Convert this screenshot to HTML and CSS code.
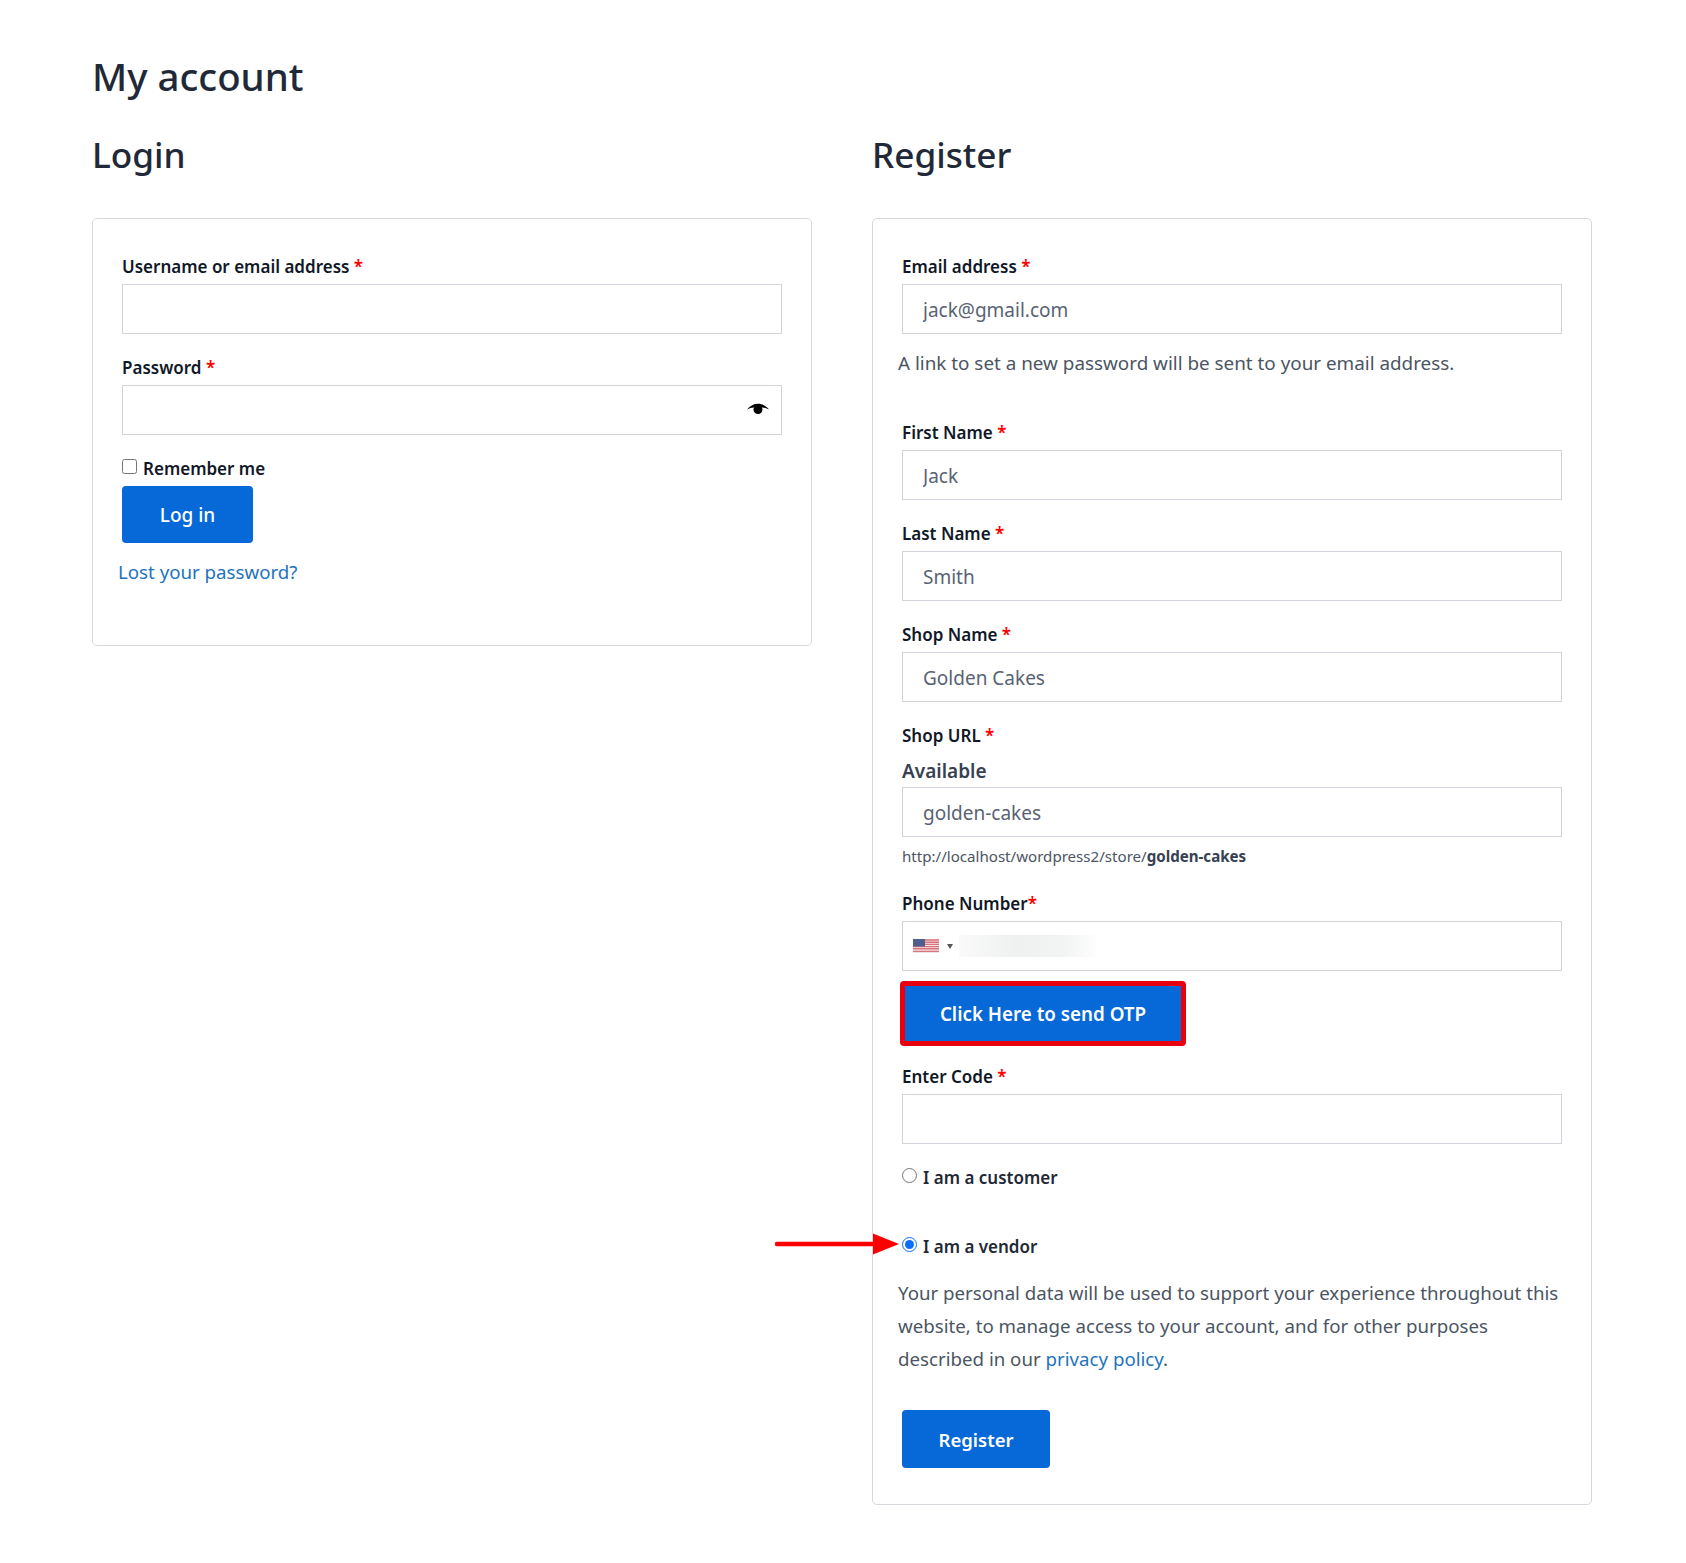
FILE: index.html
```html
<!DOCTYPE html>
<html lang="en">
<head>
    <meta charset="UTF-8">
    <title>My account</title>
    <link rel="stylesheet" href="styles.css">
</head>
<body>
    <div class="container">
        <h1 class="page-title">My account</h1>
        <div class="columns">
            <div class="column">
                <h2 class="column-title">Login</h2>
                <form class="card card-login">
                    <div class="form-row">
                        <label class="field-label">Username or email address <span class="required">*</span></label>
                        <input class="text-input" type="text">
                    </div>
                    <div class="form-row">
                        <label class="field-label">Password <span class="required">*</span></label>
                        <div class="password-wrap">
                            <input class="text-input" type="password">
                            <svg class="eye-icon" width="22" height="13" viewBox="0 0 22 13">
                                <path d="M0 6.500C3 2.800 7 0.800 11 0.800S19 2.800 22 6.500C19.500 5.200 17.500 4.700 15 4.500H7C4.500 4.700 2.500 5.200 0 6.500Z" fill="#000"/>
                                <circle cx="11" cy="6.500" r="4.500" fill="#000"/>
                            </svg>
                        </div>
                    </div>
                    <label class="remember"><input class="check" type="checkbox"> Remember me</label>
                    <button class="btn btn-login" type="button">Log in</button>
                    <a class="link lost-link" href="#">Lost your password?</a>
                </form>
            </div>
            <div class="column">
                <h2 class="column-title">Register</h2>
                <form class="card card-register">
                    <div class="form-row">
                        <label class="field-label">Email address <span class="required">*</span></label>
                        <input class="text-input" type="text" value="jack@gmail.com">
                    </div>
                    <p class="note">A link to set a new password will be sent to your email address.</p>
                    <div class="form-row">
                        <label class="field-label">First Name <span class="required">*</span></label>
                        <input class="text-input" type="text" value="Jack">
                    </div>
                    <div class="form-row">
                        <label class="field-label">Last Name <span class="required">*</span></label>
                        <input class="text-input" type="text" value="Smith">
                    </div>
                    <div class="form-row">
                        <label class="field-label">Shop Name <span class="required">*</span></label>
                        <input class="text-input" type="text" value="Golden Cakes">
                    </div>
                    <div class="form-row row-url">
                        <label class="field-label">Shop URL <span class="required">*</span></label>
                        <div class="available">Available</div>
                        <input class="text-input" type="text" value="golden-cakes">
                        <div class="shop-url">http://localhost/wordpress2/store/<strong>golden-cakes</strong></div>
                    </div>
                    <div class="form-row row-phone">
                        <label class="field-label">Phone Number<span class="required">*</span></label>
                        <div class="phone-input">
                            <svg class="flag" width="26" height="14" viewBox="0 0 26 14">
                                <rect width="26" height="14" fill="#f3e3e3"/>
                                <path d="M0 1h26M0 3.200h26M0 5.400h26M0 7.600h26M0 9.800h26M0 12.400h26" stroke="#d9747c" stroke-width="1.400"/>
                                <rect width="12" height="7.500" fill="#4f5d8f"/>
                            </svg>
                            <span class="flag-arrow"></span>
                            <span class="phone-blur"></span>
                        </div>
                    </div>
                    <button class="btn btn-otp" type="button">Click Here to send OTP</button>
                    <div class="form-row row-code">
                        <label class="field-label">Enter Code <span class="required">*</span></label>
                        <input class="text-input" type="text">
                    </div>
                    <label class="role role-customer"><input class="radio" type="radio" name="role"> I am a customer</label>
                    <label class="role role-vendor">
                        <svg class="arrow" width="124" height="22" viewBox="0 0 124 22">
                            <path d="M2 11H100" stroke="#f00" stroke-width="4.500" stroke-linecap="round"/>
                            <path d="M98 0.500L124 11 98 21.500Z" fill="#f00"/>
                        </svg>
                        <input class="radio" type="radio" name="role" checked> I am a vendor
                    </label>
                    <p class="privacy">Your personal data will be used to support your experience throughout this website, to manage access to your account, and for other purposes described in our <a class="link" href="#">privacy policy</a>.</p>
                    <button class="btn btn-register" type="button">Register</button>
                </form>
            </div>
        </div>
    </div>
</body>
</html>
```
FILE: styles.css
```css
* {
    margin: 0;
    padding: 0;
    box-sizing: border-box;
}

body {
    font-family: "Noto Sans", "Open Sans", sans-serif;
    background-color: #fff;
    color: #1f2937;
}

.container {
    width: 1500px;
    margin-left: 92px;
    padding-top: 49px;
}

.page-title {
    font-size: 38.400px;
    font-weight: 500;
    line-height: 54px;
    color: #1f2937;
    margin-bottom: 26px;
}

.columns {
    display: flex;
    gap: 60px;
}

.column {
    width: 720px;
}

.column-title {
    font-size: 35.200px;
    font-weight: 500;
    line-height: 50px;
    color: #1f2937;
    margin-bottom: 39px;
}

.card {
    border: 1px solid #d5d8dc;
    border-radius: 5px;
    padding: 36px 29px 0;
    display: flex;
    flex-direction: column;
    align-items: flex-start;
}

.card-login {
    height: 428px;
}

.card-register {
    height: 1287px;
}

.form-row {
    width: 100%;
    margin-bottom: 22px;
}

.field-label {
    display: block;
    font-size: 17px;
    font-weight: 600;
    line-height: 24px;
    color: #111827;
    margin-bottom: 5px;
}

.required {
    color: #f00;
}

.text-input {
    display: block;
    width: 100%;
    height: 50px;
    border: 1px solid #d1d5db;
    border-radius: 0;
    padding: 2px 20px 0;
    font-family: inherit;
    font-size: 19px;
    color: #596273;
    background-color: #fff;
}

.password-wrap {
    position: relative;
}

.eye-icon {
    position: absolute;
    right: 13px;
    top: 18px;
}

.remember {
    display: flex;
    align-items: center;
    gap: 6px;
    font-size: 17px;
    font-weight: 600;
    line-height: 24px;
    color: #111827;
    margin-bottom: 5px;
}

.check {
    width: 15px;
    height: 15px;
    margin-top: -6px;
}

.btn {
    border: 0;
    border-radius: 4px;
    background-color: #0768d8;
    color: #fff;
    font-family: inherit;
    font-size: 19px;
    font-weight: 500;
}

.btn-login {
    width: 131px;
    height: 57px;
}

.link {
    color: #1e73be;
    text-decoration: none;
}

.lost-link {
    font-size: 18.700px;
    line-height: 26px;
    margin: 16px 0 0 -4px;
}

.note {
    font-size: 18.850px;
    line-height: 26px;
    color: #4b5563;
    margin: -6px 0 45px -4px;
}

.row-url {
    margin-bottom: 26px;
}

.available {
    font-size: 19px;
    font-weight: 600;
    line-height: 26px;
    color: #374151;
    margin: 10px 0 3px;
}

.shop-url {
    font-size: 15.100px;
    line-height: 20px;
    color: #4b5563;
    margin-top: 9px;
}

.shop-url strong {
    color: #374151;
}

.row-phone {
    margin-bottom: 10px;
}

.phone-input {
    display: flex;
    align-items: center;
    height: 50px;
    border: 1px solid #d1d5db;
    padding-left: 10px;
}

.flag-arrow {
    width: 0;
    height: 0;
    border-left: 3px solid transparent;
    border-right: 3px solid transparent;
    border-top: 5px solid #555;
    margin-left: 8px;
}

.phone-blur {
    width: 140px;
    height: 22px;
    margin-left: 6px;
    background: linear-gradient(90deg, #fafafa, #eff0f0 40%, #f2f3f3 75%, #fff);
}

.btn-otp {
    width: 286px;
    height: 65px;
    border: 5px solid #e8000f;
    margin-left: -2px;
    margin-bottom: 19px;
    font-size: 18.800px;
    font-weight: 600;
}

.row-code {
    margin-bottom: 22px;
}

.role {
    display: flex;
    align-items: center;
    gap: 6px;
    position: relative;
    font-size: 17px;
    font-weight: 600;
    line-height: 24px;
    color: #1f2937;
}

.role-customer {
    margin-bottom: 45px;
}

.role-vendor {
    margin-bottom: 17px;
}

.radio {
    width: 15px;
    height: 15px;
    margin-top: -6px;
    accent-color: #0d6efd;
}

.arrow {
    position: absolute;
    left: -127px;
    top: -2px;
}

.privacy {
    font-size: 18.700px;
    line-height: 33px;
    color: #4b5563;
    margin: 0 0 35px -4px;
}

.btn-register {
    width: 148px;
    height: 58px;
    font-size: 18.500px;
    font-weight: 600;
}
```
